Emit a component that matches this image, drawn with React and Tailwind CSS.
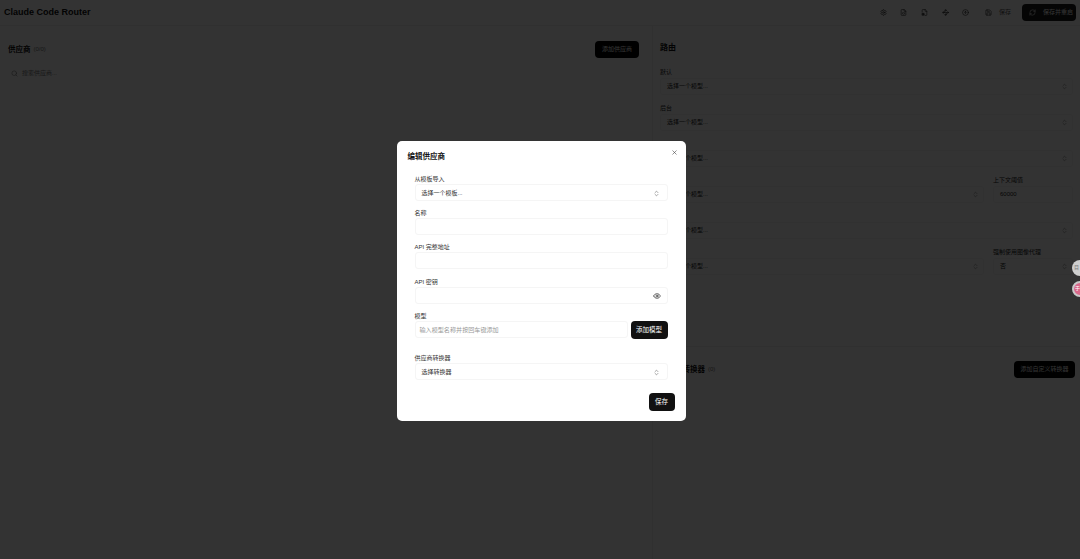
import { ChevronsUpDown, Eye, X, Search, Settings, FileJson, FileCog, Waypoints, CircleArrowUp, Save, RefreshCw } from 'lucide-react';

const cjk = { fontFamily: '"Liberation Sans", "Noto Sans CJK SC", sans-serif' };

const BgSelect = ({ label, value, className = '' }) => (
  <div className={`flex-1 ${className}`}>
    <div className="h-[12px] text-[6px] leading-[12px] text-[#222]">{label}</div>
    <div className="flex h-[17px] items-center justify-between rounded-[3px] border border-[#f5f5f5] pl-[6px] pr-[4px] text-[6px] text-[#222]">
      <span>{value}</span>
      {value !== '60000' && <ChevronsUpDown size={7} className="text-[#777]" />}
    </div>
  </div>
);

const Field = ({ label, children, className = '' }) => (
  <div className={className}>
    <div className="h-[11px] text-[6px] leading-[13px] text-[#333]">{label}</div>
    {children}
  </div>
);

const Box = ({ children, className = '' }) => (
  <div className={`flex h-[17px] items-center rounded-[3px] border border-[#f5f5f5] ${className}`}>{children}</div>
);

export default function App() {
  return (
    <div className="relative h-[559px] w-[1080px] overflow-hidden bg-white" style={cjk}>
      <header className="flex h-[26px] items-center justify-between border-b border-[#eee] pl-[4px] pr-[4px]">
        <h1 className="text-[9px] font-semibold text-[#111]">Claude Code Router</h1>
        <div className="flex items-center text-[#222]">
          <Settings size={7} className="mr-[13px]" />
          <FileJson size={7} className="mr-[14px]" />
          <FileCog size={7} className="mr-[14px]" />
          <Waypoints size={7} className="mr-[13px]" />
          <CircleArrowUp size={7} className="mr-[16px]" />
          <Save size={7} className="mr-[7px]" />
          <span className="mr-[11px] text-[6px] text-[#555]">保存</span>
          <button className="flex h-[17px] w-[54px] items-center gap-[7px] rounded-[4px] bg-black/90 pl-[7px] text-[6px] text-white">
            <RefreshCw size={7} />
            <span>保存并重启</span>
          </button>
        </div>
      </header>
      <main className="flex h-[533px]">
        <section className="w-[652px] pl-[8px] pr-[13px] pt-[15px]">
          <div className="flex h-[17px] items-center justify-between">
            <div className="flex items-center gap-[3px]">
              <span className="text-[7.5px] font-bold text-[#111]">供应商</span>
              <span className="text-[6px] text-[#777]">(0/0)</span>
            </div>
            <button className="h-[17px] w-[44px] rounded-[4px] bg-black text-[6px] text-white">添加供应商</button>
          </div>
          <div className="mt-[8px] flex h-[14px] items-center gap-[4px] text-[#777]">
            <Search size={7} className="ml-[3px]" />
            <span className="text-[6px]">搜索供应商...</span>
          </div>
        </section>
        <section className="flex-1 border-l border-[#eee]">
          <div className="h-[321px] border-b border-[#eee] pl-[7px] pr-[7px] pt-[16px]">
            <h2 className="text-[8px] font-bold text-[#111]">路由</h2>
            <div className="mt-[12px] flex flex-col gap-[7px]">
              <BgSelect label="默认" value="选择一个模型..." />
              <BgSelect label="后台" value="选择一个模型..." />
              <BgSelect label="思考" value="选择一个模型..." />
              <div className="flex gap-[9px]">
                <BgSelect label="长上下文" value="选择一个模型..." />
                <BgSelect label="上下文阈值" value="60000" className="max-w-[80px]" />
              </div>
              <BgSelect label="网络搜索" value="选择一个模型..." />
              <div className="flex gap-[9px]">
                <BgSelect label="图像" value="选择一个模型..." />
                <BgSelect label="强制使用图像代理" value="否" className="max-w-[80px]" />
              </div>
            </div>
          </div>
          <div className="flex items-center justify-between pl-[7px] pr-[5px] pt-[14px]">
            <div className="flex items-center gap-[3px]">
              <span className="text-[7.5px] font-bold text-[#111]">自定义转换器</span>
              <span className="text-[6px] text-[#777]">(0)</span>
            </div>
            <button className="h-[17px] w-[61px] rounded-[4px] bg-black text-[6px] text-white">添加自定义转换器</button>
          </div>
        </section>
      </main>

      {/* dialog overlay */}
      <div className="absolute inset-0 flex items-center justify-center bg-black/80">
        <div className="relative ml-[2px] mt-[3px] h-[280px] w-[289px] rounded-[5px] bg-white pl-[18px] pr-[18px] pt-[10px]">
          <h3 className="ml-[-7px] h-[12px] text-[7.5px] font-bold leading-[12px] text-[#111]">编辑供应商</h3>
          <X size={7} className="absolute right-[8px] top-[8px] text-[#444]" />
          <Field label="从模板导入" className="mt-[10px]">
            <Box className="justify-between pl-[6px] pr-[7px] pt-[1px] text-[6px] text-[#333]">
              <span>选择一个模板...</span>
              <ChevronsUpDown size={7} className="text-[#666]" />
            </Box>
          </Field>
          <Field label="名称" className="mt-[6px]"><Box /></Field>
          <Field label="API 完整地址" className="mt-[6px]"><Box /></Field>
          <Field label="API 密钥" className="mt-[7px]">
            <Box className="justify-end pr-[6px]"><Eye size={8} className="text-[#222]" /></Box>
          </Field>
          <Field label="模型" className="mt-[6px]">
            <div className="flex gap-[3px]">
              <Box className="flex-1 pl-[4px] pt-[1px] text-[6.1px] text-[#999]">输入模型名称并按回车键添加</Box>
              <button className="h-[18px] w-[37px] rounded-[4px] bg-[#111] text-[6.5px] text-white">添加模型</button>
            </div>
          </Field>
          <Field label="供应商转换器" className="mt-[13px]">
            <Box className="justify-between pl-[6px] pr-[7px] pt-[1px] text-[6px] text-[#333]">
              <span>选择转换器</span>
              <ChevronsUpDown size={7} className="text-[#666]" />
            </Box>
          </Field>
          <button className="absolute bottom-[10px] right-[11px] h-[18px] w-[26px] rounded-[4px] bg-[#111] text-[6.5px] text-white">保存</button>
        </div>
      </div>

      {/* floating widgets on the right edge */}
      <div className="absolute left-[1072px] top-[260px] flex h-[16px] w-[16px] items-center rounded-full bg-[#cfcfcf] pl-[2px] text-[5px] text-[#777]">目</div>
      <div className="absolute left-[1072px] top-[281px] flex h-[16px] w-[16px] items-center rounded-full border-[2px] border-[#c8c8c8] bg-[#d9688a] pl-[1px] text-[5px] text-white">于</div>
    </div>
  );
}
